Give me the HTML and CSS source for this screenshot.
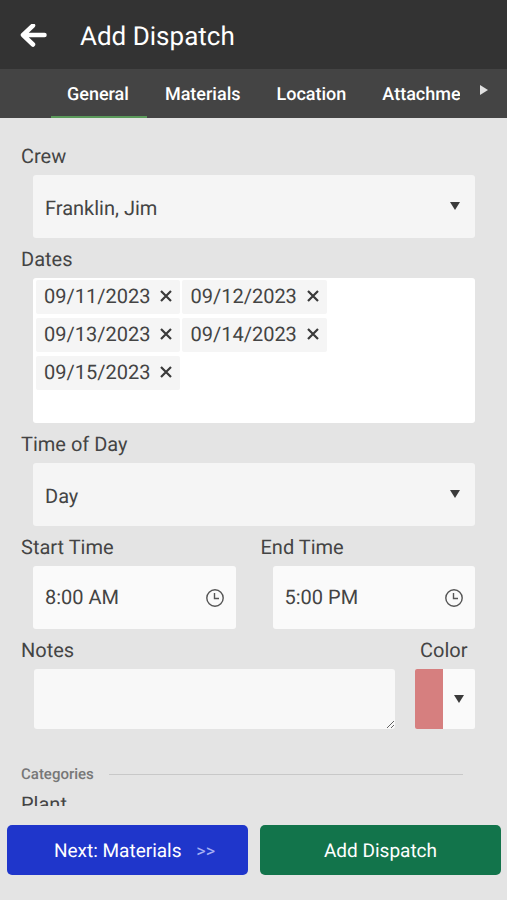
FILE: index.html
```html
<!DOCTYPE html>
<html lang="en">
<head>
    <meta charset="UTF-8">
    <meta name="viewport" content="width=device-width, initial-scale=1.0">
    <title>Add Dispatch</title>
    <link rel="stylesheet" href="styles.css">
</head>
<body>
    <header class="header">
        <button type="button" class="back" aria-label="Back">
            <svg width="28" height="26" viewBox="0 0 28 26" fill="none" stroke="#fff" stroke-width="4.500" stroke-linecap="round" stroke-linejoin="round">
                <path d="M13 1.500L3 11L13 20.500M4 11H24.500"/>
            </svg>
        </button>
        <h1>Add Dispatch</h1>
    </header>

    <nav class="tabs">
        <div class="tab-list">
            <a href="#general" class="tab active">General</a>
            <a href="#materials" class="tab">Materials</a>
            <a href="#location" class="tab">Location</a>
            <a href="#attachments" class="tab">Attachments</a>
        </div>
        <button type="button" class="tab-next" aria-label="More tabs">
            <svg width="8" height="10" viewBox="0 0 8 10" fill="#e0e0e0"><path d="M0 0L8 5L0 10Z"/></svg>
        </button>
    </nav>

    <form class="content" id="dispatchForm">
        <div class="form-group">
            <label for="crew">Crew</label>
            <div class="field">
                <select id="crew" name="crew">
                    <option>Franklin, Jim</option>
                </select>
                <svg class="arrow" width="10" height="8" viewBox="0 0 10 8"><path d="M0 0H10L5 8Z"/></svg>
            </div>
        </div>

        <div class="form-group" role="group" aria-labelledby="datesLabel">
            <span class="label" id="datesLabel">Dates</span>
            <div class="field dates">
                <span class="chip">09/11/2023 <button type="button" aria-label="Remove 09/11/2023"><svg width="12" height="12" viewBox="0 0 12 12"><path d="M1 1L11 11M11 1L1 11"/></svg></button></span>
                <span class="chip">09/12/2023 <button type="button" aria-label="Remove 09/12/2023"><svg width="12" height="12" viewBox="0 0 12 12"><path d="M1 1L11 11M11 1L1 11"/></svg></button></span>
                <span class="chip">09/13/2023 <button type="button" aria-label="Remove 09/13/2023"><svg width="12" height="12" viewBox="0 0 12 12"><path d="M1 1L11 11M11 1L1 11"/></svg></button></span>
                <span class="chip">09/14/2023 <button type="button" aria-label="Remove 09/14/2023"><svg width="12" height="12" viewBox="0 0 12 12"><path d="M1 1L11 11M11 1L1 11"/></svg></button></span>
                <span class="chip">09/15/2023 <button type="button" aria-label="Remove 09/15/2023"><svg width="12" height="12" viewBox="0 0 12 12"><path d="M1 1L11 11M11 1L1 11"/></svg></button></span>
            </div>
        </div>

        <div class="form-group">
            <label for="timeOfDay">Time of Day</label>
            <div class="field">
                <select id="timeOfDay" name="timeOfDay">
                    <option>Day</option>
                </select>
                <svg class="arrow" width="10" height="8" viewBox="0 0 10 8"><path d="M0 0H10L5 8Z"/></svg>
            </div>
        </div>

        <div class="row times">
            <div class="form-group">
                <label for="startTime">Start Time</label>
                <div class="field time">
                    <input type="text" id="startTime" name="startTime" value="8:00 AM">
                    <button type="button" class="clock" aria-label="Pick start time">
                        <svg width="18" height="18" viewBox="0 0 18 18"><circle cx="9" cy="9" r="8.200"/><path d="M8.500 4V9.500H13"/></svg>
                    </button>
                </div>
            </div>
            <div class="form-group">
                <label for="endTime">End Time</label>
                <div class="field time">
                    <input type="text" id="endTime" name="endTime" value="5:00 PM">
                    <button type="button" class="clock" aria-label="Pick end time">
                        <svg width="18" height="18" viewBox="0 0 18 18"><circle cx="9" cy="9" r="8.200"/><path d="M8.500 4V9.500H13"/></svg>
                    </button>
                </div>
            </div>
        </div>

        <div class="row">
            <div class="form-group notes">
                <label for="notes">Notes</label>
                <textarea id="notes" name="notes"></textarea>
            </div>
            <div class="form-group color">
                <label for="color">Color</label>
                <button type="button" class="color-picker" id="color">
                    <span class="swatch"></span>
                    <svg class="arrow" width="10" height="8" viewBox="0 0 10 8"><path d="M0 0H10L5 8Z"/></svg>
                </button>
            </div>
        </div>

        <h2 class="divider">Categories</h2>
        <div class="plant">Plant</div>
    </form>

    <footer class="buttons">
        <button type="button" class="next">Next: Materials <span>&gt;&gt;</span></button>
        <button type="submit" class="submit" form="dispatchForm">Add Dispatch</button>
    </footer>
</body>
</html>
```
FILE: styles.css
```css
* {
    box-sizing: border-box;
}
body {
    font-family: Roboto, "Liberation Sans", sans-serif;
    font-size: 20px;
    text-rendering: geometricPrecision;
    color: #444;
    background-color: #e4e4e4;
    margin: 0;
    height: 100vh;
    display: flex;
    flex-direction: column;
}
button,
input,
select,
textarea {
    font: inherit;
    color: inherit;
    text-rendering: inherit;
    border: none;
    background: none;
    margin: 0;
    padding: 0;
}
button {
    cursor: pointer;
}
svg {
    display: block;
}
.header {
    display: flex;
    align-items: center;
    gap: 32px;
    height: 69px;
    padding: 4px 20px 0;
    background-color: #333;
    color: #fff;
    flex-shrink: 0;
}
.header h1 {
    margin: 0;
    font-size: 26px;
    font-weight: 400;
}
.tabs {
    display: flex;
    height: 49px;
    padding-left: 51px;
    background-color: #444;
    flex-shrink: 0;
}
.tab-list {
    display: flex;
    flex: 1;
    gap: 2px;
    min-width: 0;
    overflow: hidden;
}
.tab {
    padding: 4px 18px 0 16px;
    font-size: 18px;
    font-weight: 500;
    line-height: 44px;
    color: #fff;
    text-decoration: none;
    border-bottom: 2px solid transparent;
}
.tab.active {
    border-color: #5b9a5b;
}
.tab-next {
    display: flex;
    justify-content: center;
    width: 47px;
    padding-top: 16px;
}
.content {
    flex: 1;
    min-height: 0;
    overflow: hidden;
    padding: 17px 32px 0 21px;
}
label,
.label {
    display: block;
    height: 40px;
    line-height: 43px;
}
.field {
    position: relative;
    margin-left: 12px;
    height: 63px;
    background-color: #f5f5f5;
    border-radius: 3px;
}
.field select,
.field input {
    width: 100%;
    height: 100%;
    padding: 3px 12px 0;
    appearance: none;
}
.arrow {
    fill: #3a3a3a;
}
.field .arrow {
    position: absolute;
    right: 15px;
    top: 27px;
    pointer-events: none;
}
.field.dates {
    display: flex;
    flex-wrap: wrap;
    align-content: flex-start;
    gap: 4px 2px;
    height: auto;
    min-height: 145px;
    padding: 2px 3px;
    background-color: #fff;
}
.chip {
    display: flex;
    align-items: center;
    gap: 10px;
    height: 34px;
    padding: 0 8px 2px;
    background-color: #f5f5f5;
    border-radius: 2px;
}
.chip path {
    stroke: #3a3a3a;
    stroke-width: 2.2;
}
.row {
    display: flex;
    gap: 20px;
}
.times {
    gap: 25px;
}
.times .form-group {
    flex: 1;
}
.field.time {
    display: flex;
    align-items: center;
    background-color: #fafafa;
}
.field input {
    flex: 1;
    min-width: 0;
    padding: 0 12px 2px;
}
.clock {
    margin-right: 12px;
}
.clock svg {
    fill: none;
    stroke: #555;
    stroke-width: 1.4;
}
.notes {
    flex: 1;
}
.notes textarea {
    display: block;
    width: calc(100% - 13px);
    height: 60px;
    margin-left: 13px;
    padding: 12px;
    background-color: #f8f8f8;
    border-radius: 3px;
    resize: vertical;
}
.color label {
    padding-left: 5px;
}
.color-picker {
    display: flex;
    align-items: center;
    width: 60px;
    height: 60px;
    background-color: #fafafa;
    border-radius: 2px;
    overflow: hidden;
}
.swatch {
    width: 28px;
    height: 60px;
    margin-right: 11px;
    background-color: #d67f7f;
}
.divider {
    display: flex;
    align-items: center;
    gap: 15px;
    margin: 35px 12px 0 0;
    font-size: 15px;
    line-height: 20px;
    font-weight: 500;
    color: #777;
}
.divider::after {
    content: "";
    flex: 1;
    height: 1px;
    background-color: #c8c8c8;
}
.plant {
    margin-top: 8px;
    line-height: 24px;
}
.buttons {
    display: grid;
    grid-template-columns: 1fr 1fr;
    gap: 12px;
    padding: 19px 6px 25px 7px;
    flex-shrink: 0;
}
.buttons button {
    height: 50px;
    border-radius: 5px;
    font-size: 19px;
    color: #fff;
}
.buttons .next {
    padding-left: 14px;
    background-color: #1f36cb;
}
.next span {
    margin-left: 10px;
    font-size: 18px;
    color: #a5b0f5;
}
.buttons .submit {
    background-color: #12744b;
}
```
